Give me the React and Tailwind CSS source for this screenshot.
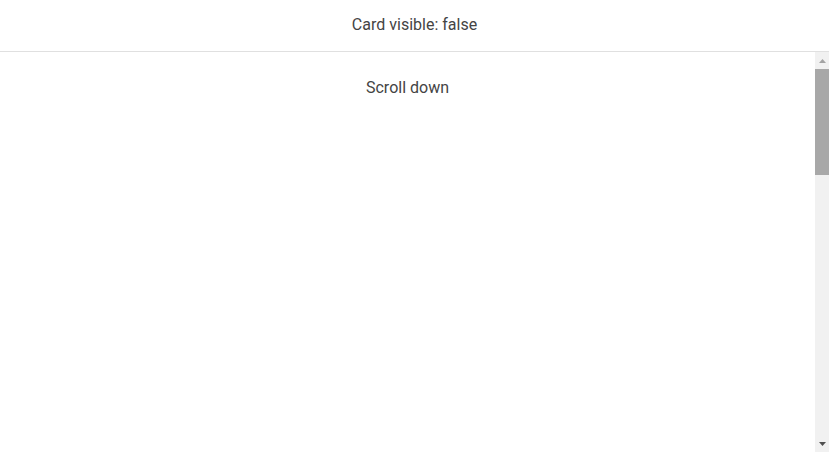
import React from 'react';

function ScrollArrow({ dir, color }) {
  return (
    <div className="h-[17px] flex items-center justify-center">
      <svg width="7" height="4" viewBox="0 0 7 4">
        <path
          d={dir === 'up' ? 'M0 4 L3.5 0 L7 4 Z' : 'M0 0 L7 0 L3.5 4 Z'}
          fill={color}
        />
      </svg>
    </div>
  );
}

export default function App() {
  return (
    <div
      className="h-[452px] w-full flex flex-col bg-white text-[#444] overflow-hidden"
      style={{ fontFamily: 'Roboto, "Liberation Sans", sans-serif' }}
    >
      {/* ── Status header ── */}
      <header className="h-[52px] shrink-0 flex justify-center pt-[13px] border-b border-[#e0e0e0] text-base leading-6">
        Card visible: false
      </header>

      {/* ── Scroll area + scrollbar ── */}
      <div className="flex-1 flex min-h-0">
        <div className="flex-1 overflow-y-auto [scrollbar-width:none]">
          <div className="flex flex-col items-center pt-[24px]">
            <p className="text-base leading-6">Scroll down</p>
            <div className="h-[1300px]" />
          </div>
        </div>
        <div className="w-[14px] shrink-0 flex flex-col bg-[#f1f1f1]">
          <ScrollArrow dir="up" color="#a3a3a3" />
          <div className="h-[106px] bg-[#a8a8a8]" />
          <div className="flex-1" />
          <ScrollArrow dir="down" color="#505050" />
        </div>
      </div>
    </div>
  );
}
